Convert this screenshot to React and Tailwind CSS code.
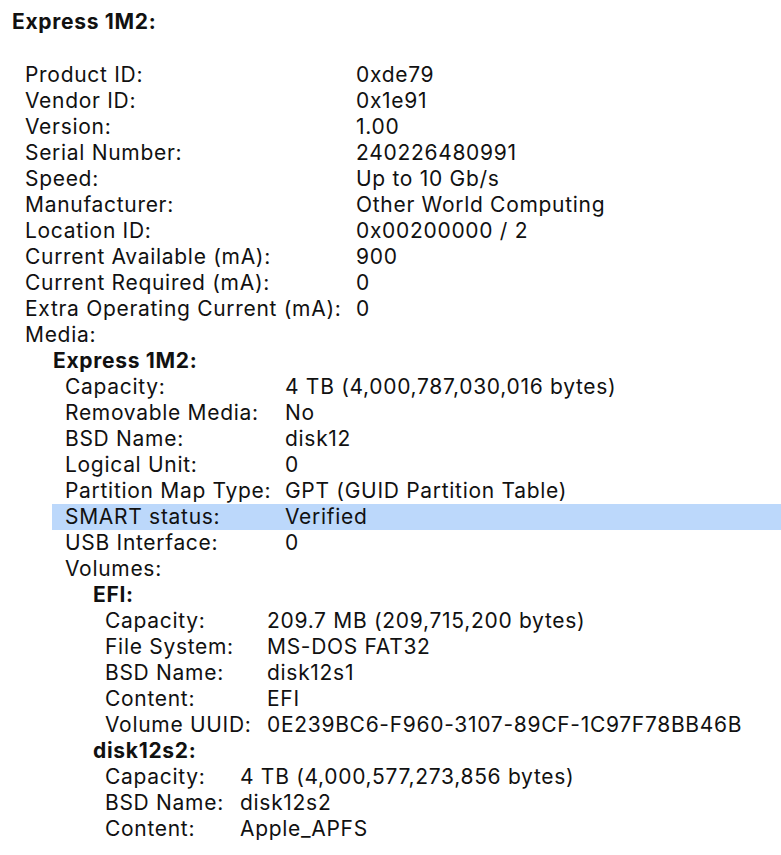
import React from "react";

const top = [
  ["Product ID:", "0xde79"],
  ["Vendor ID:", "0x1e91"],
  ["Version:", "1.00"],
  ["Serial Number:", "240226480991"],
  ["Speed:", "Up to 10 Gb/s"],
  ["Manufacturer:", "Other World Computing"],
  ["Location ID:", "0x00200000 / 2"],
  ["Current Available (mA):", "900"],
  ["Current Required (mA):", "0"],
  ["Extra Operating Current (mA):", "0"],
];

const media = [
  ["Capacity:", "4 TB (4,000,787,030,016 bytes)"],
  ["Removable Media:", "No"],
  ["BSD Name:", "disk12"],
  ["Logical Unit:", "0"],
  ["Partition Map Type:", "GPT (GUID Partition Table)"],
  ["SMART status:", "Verified", true],
  ["USB Interface:", "0"],
];

const efi = [
  ["Capacity:", "209.7 MB (209,715,200 bytes)"],
  ["File System:", "MS-DOS FAT32"],
  ["BSD Name:", "disk12s1"],
  ["Content:", "EFI"],
  ["Volume UUID:", "0E239BC6-F960-3107-89CF-1C97F78BB46B"],
];

const disk2 = [
  ["Capacity:", "4 TB (4,000,577,273,856 bytes)"],
  ["BSD Name:", "disk12s2"],
  ["Content:", "Apple_APFS"],
];

function Row({ label, value, labelW, pl, hl }) {
  return (
    <div className={`flex h-[26px] items-center whitespace-nowrap ${hl ? "bg-[#bcd8fb]" : ""}`} style={{ paddingLeft: pl }}>
      <div className="shrink-0" style={{ width: labelW }}>{label}</div>
      <div>{value}</div>
    </div>
  );
}

export default function App() {
  return (
    <div
      className="w-[781px] h-[855px] bg-white text-[#111111] text-[21px] leading-[26px] tracking-[0.7px] overflow-hidden pt-[9px]"
      style={{ fontFamily: "Inter, 'Liberation Sans', sans-serif" }}
    >
      <div className="h-[26px] flex items-center pl-[12px] font-bold">Express 1M2:</div>
      <div className="mt-[27px]">
        {top.map(([l, v]) => (
          <Row key={l} label={l} value={v} labelW={331} pl={25} />
        ))}
        <div className="h-[26px] flex items-center pl-[25px]">Media:</div>
        <div className="pl-[52px]">
          <div className="h-[26px] flex items-center pl-[1px] font-bold">Express 1M2:</div>
          {media.map(([l, v, hl]) => (
            <Row key={l} label={l} value={v} labelW={220} pl={13} hl={hl} />
          ))}
          <div className="h-[26px] flex items-center pl-[13px]">Volumes:</div>
          <div className="pl-[41px]">
            <div className="h-[26px] flex items-center font-bold">EFI:</div>
            {efi.map(([l, v]) => (
              <Row key={l} label={l} value={v} labelW={162} pl={12} />
            ))}
            <div className="h-[26px] flex items-center font-bold">disk12s2:</div>
            {disk2.map(([l, v]) => (
              <Row key={l} label={l} value={v} labelW={135} pl={12} />
            ))}
          </div>
        </div>
      </div>
    </div>
  );
}
